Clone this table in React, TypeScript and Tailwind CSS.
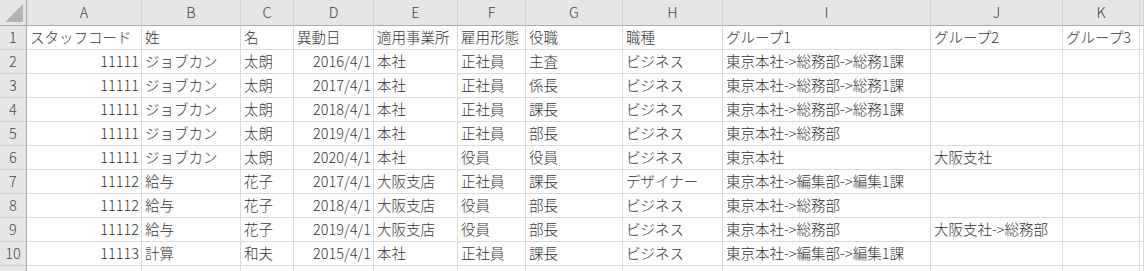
const cols = ["A", "B", "C", "D", "E", "F", "G", "H", "I", "J", "K", ""];

const rows: string[][] = [
  ["スタッフコード", "姓", "名", "異動日", "適用事業所", "雇用形態", "役職", "職種", "グループ1", "グループ2", "グループ3", ""],
  ["11111", "ジョブカン", "太朗", "2016/4/1", "本社", "正社員", "主査", "ビジネス", "東京本社->総務部->総務1課", "", "", ""],
  ["11111", "ジョブカン", "太朗", "2017/4/1", "本社", "正社員", "係長", "ビジネス", "東京本社->総務部->総務1課", "", "", ""],
  ["11111", "ジョブカン", "太朗", "2018/4/1", "本社", "正社員", "課長", "ビジネス", "東京本社->総務部->総務1課", "", "", ""],
  ["11111", "ジョブカン", "太朗", "2019/4/1", "本社", "正社員", "部長", "ビジネス", "東京本社->総務部", "", "", ""],
  ["11111", "ジョブカン", "太朗", "2020/4/1", "本社", "役員", "役員", "ビジネス", "東京本社", "大阪支社", "", ""],
  ["11112", "給与", "花子", "2017/4/1", "大阪支店", "正社員", "課長", "デザイナー", "東京本社->編集部->編集1課", "", "", ""],
  ["11112", "給与", "花子", "2018/4/1", "大阪支店", "役員", "部長", "ビジネス", "東京本社->総務部", "", "", ""],
  ["11112", "給与", "花子", "2019/4/1", "大阪支店", "役員", "部長", "ビジネス", "東京本社->総務部", "大阪支社->総務部", "", ""],
  ["11113", "計算", "和夫", "2015/4/1", "本社", "正社員", "課長", "ビジネス", "東京本社->編集部->編集1課", "", "", ""],
  ["", "", "", "", "", "", "", "", "", "", "", ""],
];

// right aligned: code + date columns, except the title row
const isRight = (r: number, c: number) => r > 0 && (c === 0 || c === 3);

export default function App() {
  return (
    <div
      className="w-[1144px] h-[271px] overflow-hidden bg-white text-[14.5px] leading-none font-light text-[#333]"
      style={{ fontFamily: '"Noto Sans CJK JP", "Noto Sans", sans-serif' }}
    >
      <div className="grid grid-cols-[27px_115px_99px_53px_80px_84px_68px_97px_100px_208px_132px_77px_1fr] grid-rows-[26px_repeat(11,24px)]">
        {/* corner */}
        <div className="relative bg-[#e6e6e6] border-r border-b border-[#ababab]">
          <svg className="absolute right-[3px] bottom-[3px]" width="18" height="18" viewBox="0 0 18 18">
            <polygon points="18,0 18,18 0,18" fill="#b4b4b4" />
          </svg>
        </div>
        {cols.map((c, i) => (
          <div
            key={"h" + i}
            className="flex items-center justify-center bg-[#e6e6e6] border-b border-b-[#ababab] border-r border-r-[#d0d0d0] text-[#444]"
          >
            {c}
          </div>
        ))}

        {rows.map((row, r) => (
          <>
            <div
              key={"r" + r}
              className="flex items-center justify-center bg-[#e6e6e6] border-r border-r-[#ababab] border-b border-b-[#d0d0d0] text-[#444]"
            >
              {r < 10 ? r + 1 : ""}
            </div>
            {row.map((v, c) => (
              <div
                key={r + "-" + c}
                className={
                  "flex items-center whitespace-nowrap overflow-visible border-r border-b border-[#dadada] pb-[1px] " +
                  (isRight(r, c) ? "justify-end pr-[2px]" : "pl-[3px]")
                }
              >
                {v}
              </div>
            ))}
          </>
        ))}
      </div>
    </div>
  );
}
